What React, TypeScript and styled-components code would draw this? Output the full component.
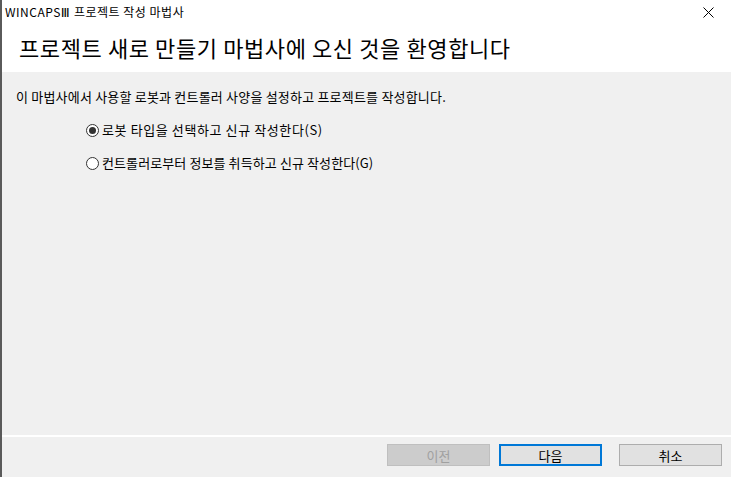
import * as React from "react";
import styled, { createGlobalStyle } from "styled-components";

const GlobalStyle = createGlobalStyle`
	html, body {
		margin: 0;
		padding: 0;
		width: 731px;
		height: 477px;
		overflow: hidden;
		background: #ffffff;
	}
	body {
		font-family: "Noto Sans CJK KR", "Noto Sans", sans-serif;
		color: #000000;
	}
	#root {
		height: 100%;
	}
`;

const Window = styled.div`
	display: flex;
	flex-direction: column;
	width: 731px;
	height: 477px;
	border-left: 2px solid #5a5a5a;
	box-sizing: border-box;
	background: #f0f0f0;
`;

const TitleBar = styled.div`
	display: flex;
	align-items: center;
	justify-content: space-between;
	height: 26px;
	padding-left: 3px;
	background: #ffffff;
`;

const TitleText = styled.span`
	font-size: 12px;
	line-height: 14px;
	letter-spacing: 0.5px;
	margin-top: -2px;
`;

const Numeral = styled.span`
	font-family: "DejaVu Sans", sans-serif;
	font-size: 13px;
	letter-spacing: 0;
	margin-right: 1px;
`;

const CloseButton = styled.div`
	display: flex;
	align-items: center;
	justify-content: center;
	width: 46px;
	height: 26px;
	margin-top: -1px;
`;

const Header = styled.div`
	display: flex;
	align-items: center;
	height: 46px;
	padding-left: 17px;
	background: #ffffff;
`;

const Heading = styled.h1`
	margin: 0 0 4px 0;
	font-size: 22px;
	font-weight: 400;
	letter-spacing: 0.6px;
	line-height: 26px;
`;

const Body = styled.div`
	flex: 1;
	display: flex;
	flex-direction: column;
	padding: 17px 0 0 14px;
	border-bottom: 2px solid #ffffff;
`;

const Intro = styled.p`
	margin: 0;
	font-size: 13px;
	letter-spacing: 0.2px;
	line-height: 16px;
`;

const OptionList = styled.div`
	display: flex;
	flex-direction: column;
	gap: 17px;
	padding: 17px 0 0 70px;
`;

const Option = styled.label<{ wide?: boolean }>`
	display: flex;
	align-items: center;
	gap: 3px;
	font-size: 13px;
	letter-spacing: ${p => (p.wide ? "0.6px" : "0.1px")};
	line-height: 16px;
`;

const RadioDot = styled.span<{ checked: boolean }>`
	box-sizing: border-box;
	display: flex;
	align-items: center;
	justify-content: center;
	width: 13px;
	height: 13px;
	border-radius: 50%;
	border: 1px solid #333333;
	background: #ffffff;

	&::after {
		content: "";
		display: ${p => (p.checked ? "block" : "none")};
		width: 7px;
		height: 7px;
		border-radius: 50%;
		background: #333333;
	}
`;

const Footer = styled.div`
	display: flex;
	justify-content: flex-end;
	gap: 9px;
	height: 40px;
	padding: 7px 9px 0 0;
	box-sizing: border-box;
`;

const Button = styled.button<{ primary?: boolean; spaced?: boolean }>`
	box-sizing: border-box;
	width: 103px;
	height: 22px;
	margin: 0 0 0 ${p => (p.spaced ? "8px" : "0")};
	padding: 0;
	font-family: inherit;
	font-size: 13px;
	color: #000000;
	background: #e1e1e1;
	border: ${p => (p.primary ? "2px solid #0078d7" : "1px solid #adadad")};
	&:disabled {
		color: #a0a0a0;
		background: #cccccc;
		border-color: #bfbfbf;
	}
`;

const options = [
	{ label: "로봇 타입을 선택하고 신규 작성한다(S)", checked: true, wide: true },
	{ label: "컨트롤러로부터 정보를 취득하고 신규 작성한다(G)", checked: false, wide: false }
];

export default function App() {
	return (
		<>
			<GlobalStyle />
			<Window>
				<TitleBar>
					<TitleText>
						WINCAPS<Numeral>Ⅲ</Numeral> 프로젝트 작성 마법사
					</TitleText>
					<CloseButton>
						<svg width="11" height="11" viewBox="0 0 11 11">
							<path d="M0.5 0.5 L10.5 10.5 M10.5 0.5 L0.5 10.5" stroke="#000" strokeWidth="1" />
						</svg>
					</CloseButton>
				</TitleBar>
				<Header>
					<Heading>프로젝트 새로 만들기 마법사에 오신 것을 환영합니다</Heading>
				</Header>
				<Body>
					<Intro>이 마법사에서 사용할 로봇과 컨트롤러 사양을 설정하고 프로젝트를 작성합니다.</Intro>
					<OptionList>
						{options.map(o => (
							<Option key={o.label} wide={o.wide}>
								<RadioDot checked={o.checked} />
								{o.label}
							</Option>
						))}
					</OptionList>
				</Body>
				<Footer>
					<Button disabled>이전</Button>
					<Button primary>다음</Button>
					<Button spaced>취소</Button>
				</Footer>
			</Window>
		</>
	);
}
